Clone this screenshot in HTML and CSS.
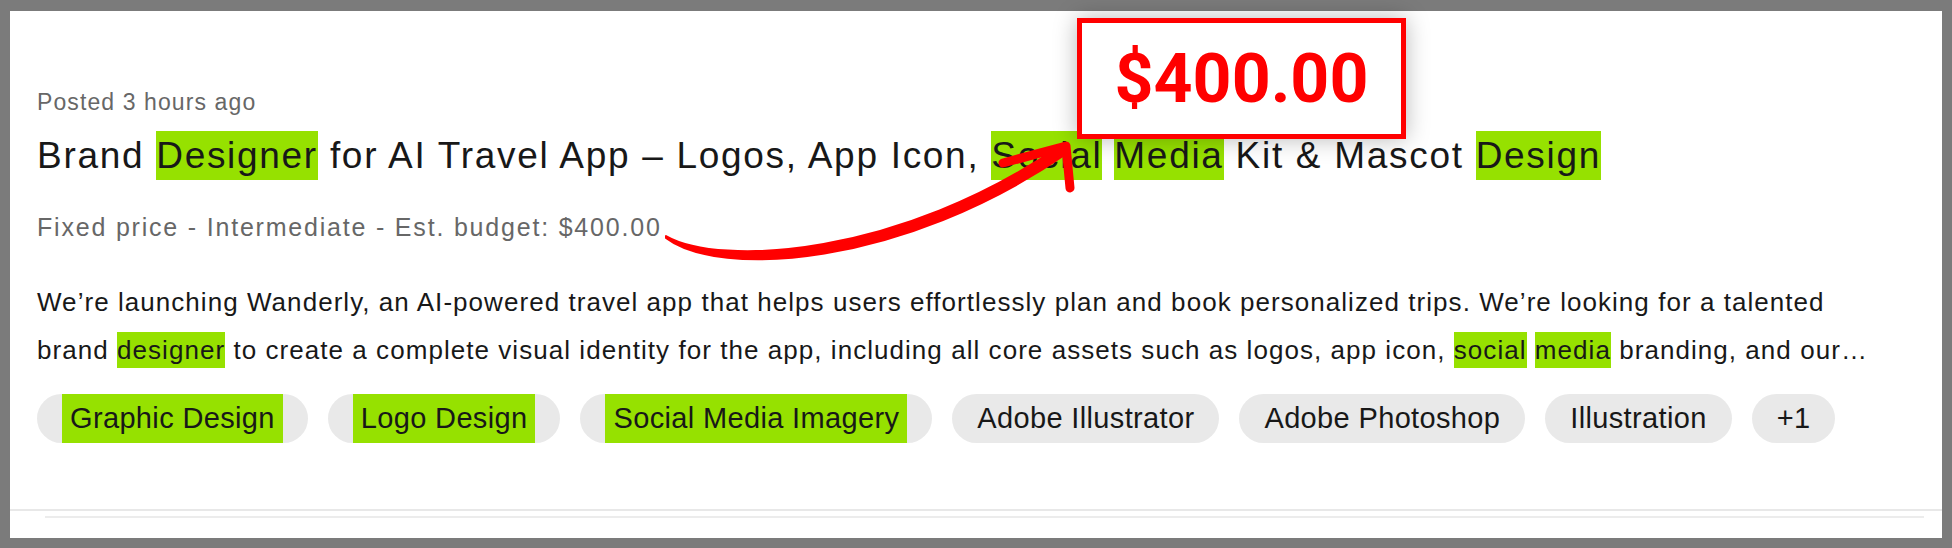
FILE: index.html
```html
<!DOCTYPE html>
<html lang="en">
<head>
    <meta charset="UTF-8">
    <title>Job post - Brand Designer</title>
    <link rel="stylesheet" href="styles.css">
</head>
<body>
    <div class="frame">
        <div class="card">
            <section class="job">
                <div class="posted">Posted 3 hours ago</div>
                <h2 class="title">Brand <mark>Designer</mark> for AI Travel App – Logos, App Icon, <mark>Social</mark> <mark>Media</mark> Kit &amp; Mascot <mark>Design</mark></h2>
                <div class="meta">Fixed price - Intermediate - Est. budget: $400.00</div>
                <p class="desc">We’re launching Wanderly, an AI-powered travel app that helps users effortlessly plan and book personalized trips. We’re looking for a talented brand <mark>designer</mark> to create a complete visual identity for the app, including all core assets such as logos, app icon, <mark>social</mark> <mark>media</mark> branding, and our…</p>
                <div class="tags">
                    <span class="tag"><mark>Graphic Design</mark></span>
                    <span class="tag"><mark>Logo Design</mark></span>
                    <span class="tag"><mark>Social Media Imagery</mark></span>
                    <span class="tag">Adobe Illustrator</span>
                    <span class="tag">Adobe Photoshop</span>
                    <span class="tag">Illustration</span>
                    <span class="tag">+1</span>
                </div>
            </section>
            <div class="divider"></div>
        </div>

        <!-- annotation -->
        <div class="price-callout">$400.00</div>
        <svg class="arrow" width="1952" height="548" viewBox="0 0 1952 548">
            <path d="M666 236 C720 267, 900 257, 1063 144 L1069 152 C902 268, 718 278, 666 238 Z" fill="#ff0000" stroke="#ff0000" stroke-width="2" stroke-linejoin="round"/>
            <path d="M1003 163 L1066 146 L1070 188" fill="none" stroke="#ff0000" stroke-width="9" stroke-linecap="round" stroke-linejoin="round"/>
        </svg>
    </div>
</body>
</html>
```

FILE: styles.css
```css
:root {
    --frame: #7b7b7b;
    --ink: #181818;
    --muted: #676767;
    --hl: #96e100;
    --pill: #e9e9e9;
    --red: #ff0000;
}

* {
    margin: 0;
    padding: 0;
    box-sizing: border-box;
}

body {
    font-family: 'Liberation Sans', Arial, sans-serif;
    color: var(--ink);
    background: var(--frame);
}

.frame {
    position: relative;
    width: 1952px;
    height: 548px;
    padding: 11px 10px 10px 10px;
    background: var(--frame);
}

.card {
    height: 100%;
    background: #fff;
}

.job {
    padding: 75px 40px 66px 27px;
    border-bottom: 2px solid #e8e8e8;
}

mark {
    background: var(--hl);
    color: inherit;
}

.posted {
    font-size: 23px;
    line-height: 32px;
    letter-spacing: 1.1px;
    color: var(--muted);
}

.title {
    margin-top: 14px;
    font-size: 37px;
    font-weight: 400;
    line-height: 48px;
    letter-spacing: 1.7px;
}

.title mark {
    padding: 4px 0;
}

.meta {
    margin-top: 31px;
    font-size: 25px;
    line-height: 32px;
    letter-spacing: 1.8px;
    color: var(--muted);
}

.desc {
    margin-top: 35px;
    font-size: 26px;
    line-height: 48px;
    letter-spacing: 1.05px;
}

.desc mark {
    padding: 3px 0;
}

.tags {
    display: flex;
    gap: 20px;
    margin-top: 20px;
}

.tag {
    display: inline-flex;
    align-items: center;
    height: 49px;
    padding: 0 25px;
    border-radius: 25px;
    background: var(--pill);
    font-size: 29px;
    letter-spacing: 0.35px;
}

.tag mark {
    align-self: stretch;
    display: flex;
    align-items: center;
    padding: 0 8px;
}

.divider {
    height: 2px;
    margin: 5px 18px 0 35px;
    background: #ececec;
}

.price-callout {
    position: absolute;
    left: 1077px;
    top: 18px;
    width: 329px;
    height: 121px;
    display: flex;
    align-items: center;
    justify-content: center;
    border: 5px solid var(--red);
    background: #fff;
    box-shadow: 0 0 22px rgba(0, 0, 0, 0.28);
    font-family: Roboto, sans-serif;
    font-weight: 700;
    font-size: 68px;
    color: var(--red);
}

.arrow {
    position: absolute;
    left: 0;
    top: 0;
    pointer-events: none;
}
```
